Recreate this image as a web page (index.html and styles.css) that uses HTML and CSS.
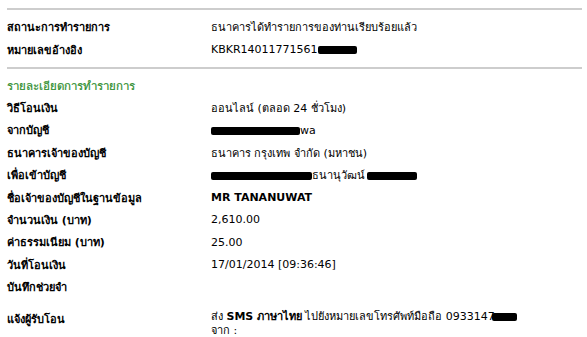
FILE: index.html
```html
<!DOCTYPE html>
<html lang="th">
  <head>
    <meta charset="UTF-8" />
    <meta name="viewport" content="width=device-width, initial-scale=1.0" />
    <title>รายละเอียดการทำรายการ</title>
    <link rel="stylesheet" href="styles.css">
  </head>
  <body>
    <div class="page">
      <div class="rule"></div>

      <div class="row">
        <div class="label">สถานะการทำรายการ</div>
        <div class="value">ธนาคารได้ทำรายการของท่านเรียบร้อยแล้ว</div>
      </div>
      <div class="row">
        <div class="label">หมายเลขอ้างอิง</div>
        <div class="value latin">KBKR14011771561<span class="mask ref"></span></div>
      </div>

      <div class="rule"></div>

      <div class="section-title">รายละเอียดการทำรายการ</div>

      <div class="row">
        <div class="label">วิธีโอนเงิน</div>
        <div class="value">ออนไลน์ (ตลอด 24 ชั่วโมง)</div>
      </div>
      <div class="row">
        <div class="label">จากบัญชี</div>
        <div class="value"><span class="mask from"></span><span class="latin">wa</span></div>
      </div>
      <div class="row">
        <div class="label">ธนาคารเจ้าของบัญชี</div>
        <div class="value">ธนาคาร กรุงเทพ จำกัด (มหาชน)</div>
      </div>
      <div class="row">
        <div class="label">เพื่อเข้าบัญชี</div>
        <div class="value"><span class="mask to"></span>ธนานุวัฒน์<span class="mask surname"></span></div>
      </div>
      <div class="row">
        <div class="label">ชื่อเจ้าของบัญชีในฐานข้อมูล</div>
        <div class="value latin strong">MR TANANUWAT</div>
      </div>
      <div class="row">
        <div class="label">จำนวนเงิน (บาท)</div>
        <div class="value latin">2,610.00</div>
      </div>
      <div class="row">
        <div class="label">ค่าธรรมเนียม (บาท)</div>
        <div class="value latin">25.00</div>
      </div>
      <div class="row">
        <div class="label">วันที่โอนเงิน</div>
        <div class="value latin">17/01/2014 [09:36:46]</div>
      </div>
      <div class="row">
        <div class="label">บันทึกช่วยจำ</div>
        <div class="value"></div>
      </div>
      <div class="row notify">
        <div class="label">แจ้งผู้รับโอน</div>
        <div class="value">
          <div>ส่ง <b class="latin">SMS</b> <b>ภาษาไทย</b> ไปยังหมายเลขโทรศัพท์มือถือ <span class="latin">0933147</span><span class="mask phone"></span></div>
          <div>จาก :</div>
        </div>
      </div>
    </div>
  </body>
</html>
```

FILE: styles.css
```css
* {
  margin: 0;
  padding: 0;
  box-sizing: border-box;
}

body {
  background: #fff;
  color: #000;
  font-family: "DejaVu Sans", Tahoma, "Noto Sans", sans-serif;
  font-size: 11px;
  overflow: hidden;
}

.page {
  padding: 8px 5px 0 7px;
}

.rule {
  height: 2px;
  background: #cdcdcd;
}

.rule + .row {
  margin-top: 6px;
}

.row + .rule {
  margin-top: 6px;
}

.row {
  display: grid;
  grid-template-columns: 204px 1fr;
  align-items: center;
  height: 22.4px;
}

.label {
  font-weight: bold;
}

.latin {
  font-family: "DejaVu Sans", Verdana, sans-serif;
}

.strong {
  font-weight: bold;
}

.section-title {
  margin-top: 7px;
  height: 21px;
  line-height: 21px;
  color: #2b8c2b;
  font-size: 11.5px;
  -webkit-text-stroke: 0.2px #2b8c2b;
}

.mask {
  display: inline-block;
  height: 8px;
  background: #000;
  border-radius: 2px;
  vertical-align: -1px;
}

.mask.ref {
  width: 39px;
}

.mask.from {
  width: 89px;
}

.mask.to {
  width: 101px;
}

.mask.surname {
  width: 50px;
  margin-left: 2px;
}

.mask.phone {
  width: 25px;
  margin-left: -3px;
}

.notify {
  height: auto;
  align-items: start;
}

.notify .label {
  padding-top: 15px;
  line-height: 14px;
}

.notify .value {
  padding-top: 12px;
  line-height: 14px;
}
```
